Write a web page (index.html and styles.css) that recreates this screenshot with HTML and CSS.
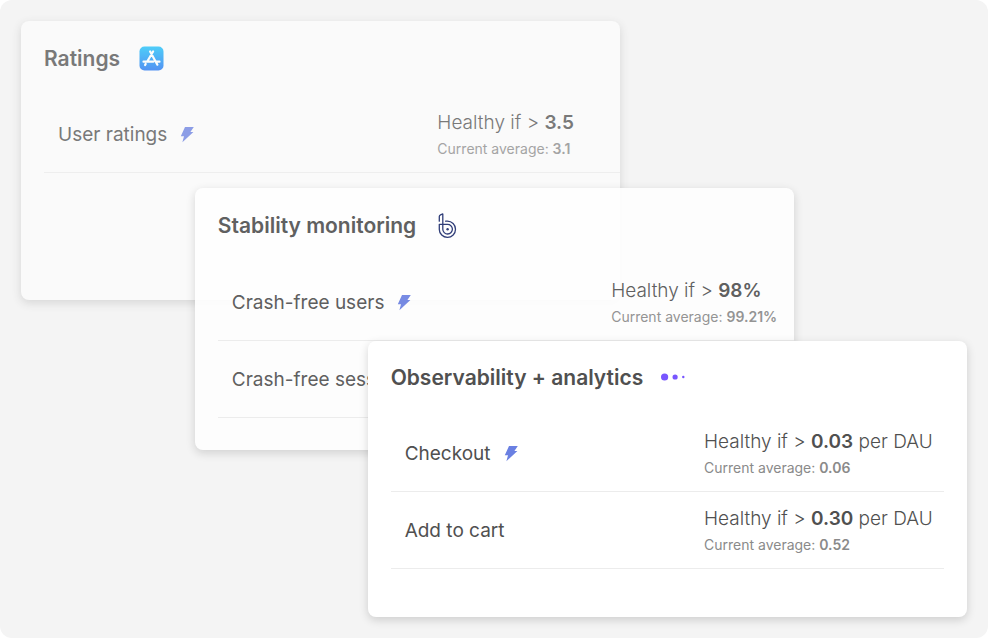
FILE: index.html
```html
<!DOCTYPE html>
<html lang="en">
<head>
<meta charset="utf-8">
<meta name="viewport" content="width=device-width, initial-scale=1">
<title>Health metrics</title>
<link rel="stylesheet" href="styles.css">
</head>
<body>
<svg width="0" height="0" class="defs" aria-hidden="true">
  <symbol id="bolt" viewBox="0 0 14 17"><path d="M5 1H13.8L10.4 6H13.4L2.4 16.2L4 10.2H.8Z" fill="#6a80e2"/></symbol>
</svg>
<main class="board">
  <section class="card card-ratings">
    <header class="card-header">
      <h2>Ratings</h2>
      <svg class="logo" viewBox="0 0 26 26" aria-hidden="true">
        <defs><linearGradient id="sky" x1="0" y1="0" x2="0" y2="1"><stop offset="0" stop-color="#17c1fb"/><stop offset="1" stop-color="#1d72f2"/></linearGradient></defs>
        <rect x="1.5" y="0.5" width="24" height="24" rx="5" fill="url(#sky)"/>
        <g fill="none" stroke="#fff" stroke-width="2.2" stroke-linecap="round"><path d="M15.1 5.5L9.1 15.7M12.1 5.5L19.4 18.7M5.5 15.7H15.3M18.7 15.7H21.5M7.7 17.9L7.1 19"/></g>
      </svg>
    </header>
    <ul class="metrics">
      <li class="metric">
        <span class="name">User ratings <svg class="bolt" aria-hidden="true"><use href="#bolt"/></svg></span>
        <div class="reading"><p class="target">Healthy if &gt; <b>3.5</b></p><p class="average">Current average: <b>3.1</b></p></div>
      </li>
    </ul>
  </section>
  <section class="card card-stability">
    <header class="card-header">
      <h2>Stability monitoring</h2>
      <svg class="logo" viewBox="0 0 26 26" aria-hidden="true">
        <g fill="none" stroke="#1b2a6b" stroke-width="1.3" stroke-linecap="round" stroke-linejoin="round">
          <path d="M5.3 8.2V3.6Q5.3 2.3 6.5 1.8L8.8.9V11.4H13.4A4.8 4.8 0 1 1 8.8 16.2V11.4H5.3V16.4A8.1 8.1 0 1 0 13.4 8.2H11.6"/>
        </g>
        <circle cx="13.6" cy="16.2" r="1.2" fill="#1b2a6b"/>
      </svg>
    </header>
    <ul class="metrics">
      <li class="metric">
        <span class="name">Crash-free users <svg class="bolt" aria-hidden="true"><use href="#bolt"/></svg></span>
        <div class="reading"><p class="target">Healthy if &gt; <b>98%</b></p><p class="average">Current average: <b>99.21%</b></p></div>
      </li>
      <li class="metric"><span class="name">Crash-free sessions</span></li>
    </ul>
  </section>
  <section class="card card-analytics">
    <header class="card-header">
      <h2>Observability + analytics</h2>
      <svg class="logo" viewBox="0 0 26 26" aria-hidden="true"><g fill="#7856ff"><circle cx="3.6" cy="12" r="3.6"/><circle cx="14.1" cy="12" r="2.6"/><circle cx="22.3" cy="12" r="1.2"/></g></svg>
    </header>
    <ul class="metrics">
      <li class="metric">
        <span class="name">Checkout <svg class="bolt" aria-hidden="true"><use href="#bolt"/></svg></span>
        <div class="reading"><p class="target">Healthy if &gt; <b>0.03</b> per DAU</p><p class="average">Current average: <b>0.06</b></p></div>
      </li>
      <li class="metric">
        <span class="name">Add to cart</span>
        <div class="reading"><p class="target">Healthy if &gt; <b>0.30</b> per DAU</p><p class="average">Current average: <b>0.52</b></p></div>
      </li>
    </ul>
  </section>
</main>
</body>
</html>
```
FILE: styles.css
```css
* {
  box-sizing: border-box;
  margin: 0;
  padding: 0;
}

body {
  background: #fff;
  font-family: Inter, "Liberation Sans", sans-serif;
  color: #505050;
}

.defs {
  display: block;
}

/* Cards share grid lines so that each one overlaps the one before it. */
.board {
  display: grid;
  grid-template-columns: 174fr 173fr 253fr 174fr 173fr;
  grid-template-rows: 167px 112px 41px 109px auto;
  min-height: 100vh;
  padding: 21px;
  background: #f4f4f4;
  border-radius: 12px;
}

.card {
  min-width: 0;
  padding: 0 23px 24px;
  background: #fff;
  border-radius: 8px;
  box-shadow: 0 3px 10px rgb(0 0 0 / 16%);
}

.card-ratings {
  grid-area: 1 / 1 / 3 / 4;
  padding-right: 0;
  background: #fcfcfc;
  opacity: 0.75;
}

.card-stability {
  grid-area: 2 / 2 / 5 / 5;
  padding-right: 0;
  opacity: 0.9;
}

.card-analytics {
  grid-area: 4 / 3 / 6 / 6;
}

.card-stability,
.card-analytics {
  position: relative;
}

.card-header {
  display: flex;
  align-items: center;
  gap: 18px;
  height: 75px;
}

.card-analytics .card-header {
  height: 74px;
}

.card-stability .metrics {
  padding-top: 1px;
}

h2 {
  font-size: 21px;
  font-weight: 600;
  line-height: 26px;
}

.logo {
  width: 26px;
  height: 26px;
}

.metrics {
  list-style: none;
}

.metric {
  display: flex;
  align-items: center;
  justify-content: space-between;
  height: 77px;
  padding-left: 14px;
  border-bottom: 1px solid #ececec;
}

.name {
  display: flex;
  align-items: center;
  gap: 13px;
  font-size: 19px;
  font-weight: 400;
}

.bolt {
  width: 14px;
  height: 17px;
}

.reading {
  width: 183px;
  padding-top: 2px;
}

.card-analytics .reading {
  width: 240px;
}

.target {
  font-size: 19px;
  font-weight: 350;
  line-height: 27px;
}

.average {
  font-size: 14px;
  font-weight: 400;
  line-height: 26px;
  color: #8a8a8a;
}

b {
  font-weight: 600;
}
```
